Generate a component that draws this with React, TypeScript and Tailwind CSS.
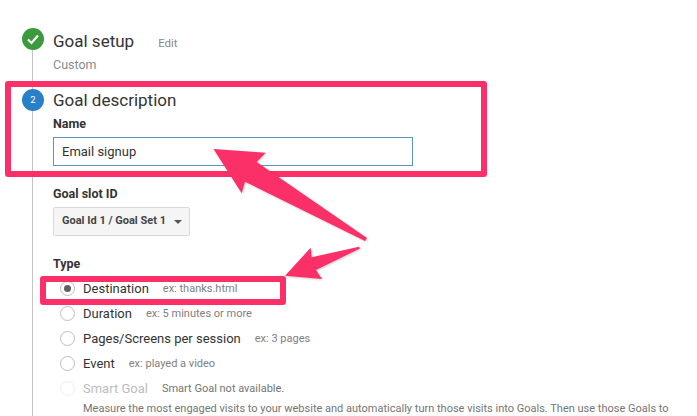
const roboto = "font-['Roboto',sans-serif]";

function RadioRow({ label, hint, checked, disabled }: { label: string; hint: string; checked?: boolean; disabled?: boolean }) {
  return (
    <div className="flex items-center h-[25px]">
      <span className={`shrink-0 w-[15px] h-[15px] rounded-full border flex items-center justify-center bg-white ${disabled ? "border-[#eeeeee]" : "border-[#bdbdbd]"}`}>
        {checked && <span className="w-[7px] h-[7px] rounded-full bg-[#616161]"></span>}
      </span>
      <span className={`ml-[8px] text-[13px] ${disabled ? "text-[#bdbdbd]" : "text-[#333333]"}`}>{label}</span>
      <span className={`ml-[14px] mt-[2px] text-[11px] ${disabled ? "text-[#757575]" : "text-[#808080]"}`}>{hint}</span>
    </div>
  );
}

export default function App() {
  return (
    <div className={`relative w-[697px] h-[416px] overflow-hidden bg-white ${roboto}`}>
      {/* stepper line */}
      <div className="absolute left-[32px] top-[45px] bottom-0 w-px bg-[#c4c4c4]"></div>

      <div className="relative pl-[22px] pt-[28px]">
        <div className="flex">
          <div className="shrink-0 w-[22px] h-[22px] rounded-full bg-[#3b9a3c] flex items-center justify-center">
            <svg width="14" height="12" viewBox="0 0 14 12" fill="none">
              <path d="M2 6.5 L5.5 10 L12 2.5" stroke="white" strokeWidth="2.2" />
            </svg>
          </div>
          <div className="ml-[9px]">
            <div className="flex items-baseline h-[24px] mt-[1px]">
              <span className="text-[17px] leading-[24px] text-[#333333]">Goal setup</span>
              <span className="ml-[24px] text-[11.5px] text-[#8a8a8a]">Edit</span>
            </div>
            <div className="mt-[4px] text-[12.5px] leading-[16px] text-[#8a8a8a]">Custom</div>
          </div>
        </div>

        <div className="flex mt-[16px]">
          <div className="shrink-0 w-[22px] h-[22px] rounded-full bg-[#2a7fc9] flex items-center justify-center text-white text-[9.5px]">2</div>
          <div className="ml-[9px]">
            <div className="-mt-[1px] text-[17px] leading-[24px] text-[#333333]">Goal description</div>
            <div className="mt-[4px] text-[12.5px] leading-[16px] font-bold text-[#333333]">Name</div>
            <div className="mt-[5px] w-[360px] h-[29px] border border-[#5b94c4] flex items-center pl-[8px] text-[13px] text-[#333333]">Email signup</div>
            <div className="mt-[20px] text-[12.5px] leading-[16px] font-bold text-[#333333]">Goal slot ID</div>
            <div className="mt-[5px] w-[137px] h-[29px] rounded-[2px] border border-[#d9d9d9] bg-[#f5f5f5] flex items-center pl-[8px] text-[11px] font-bold text-[#444444]">
              Goal Id 1 / Goal Set 1
              <span className="ml-[8px] w-0 h-0 border-x-[4px] border-x-transparent border-t-[4px] border-t-[#555555]"></span>
            </div>
            <div className="mt-[20px] text-[12.5px] leading-[16px] font-bold text-[#333333]">Type</div>
            <div className="mt-[4px] ml-[7px]">
              <RadioRow label="Destination" hint="ex: thanks.html" checked />
              <RadioRow label="Duration" hint="ex: 5 minutes or more" />
              <RadioRow label="Pages/Screens per session" hint="ex: 3 pages" />
              <RadioRow label="Event" hint="ex: played a video" />
              <RadioRow label="Smart Goal" hint="Smart Goal not available." disabled />
              <div className="ml-[23px] w-[620px] whitespace-nowrap text-[11px] leading-[16px] text-[#757575]">
                Measure the most engaged visits to your website and automatically turn those visits into Goals. Then use those Goals to
              </div>
            </div>
          </div>
        </div>
      </div>

      {/* annotation overlays */}
      <div className="absolute left-[5px] top-[81px] w-[482px] h-[96px] border-[6px] border-[#fb3068] rounded-[3px]"></div>
      <div className="absolute left-[40px] top-[276px] w-[246px] h-[29px] border-[6px] border-[#fb3068] rounded-[3px]"></div>
      <svg className="absolute left-0 top-0 drop-shadow-[1px_1px_1px_rgba(0,0,0,0.2)]" width="697" height="416" viewBox="0 0 697 416">
        <path d="M213.5 149 L265.7 152.7 L256.7 162 L367 238 L365 241 L245 181.7 L241.7 193.3 Z" fill="#fb3068" />
        <path d="M285 275.7 L310.7 247.7 L311.7 257.3 L359 246.7 L360 248.5 L316 270 L322 279 Z" fill="#fb3068" />
      </svg>
    </div>
  );
}
